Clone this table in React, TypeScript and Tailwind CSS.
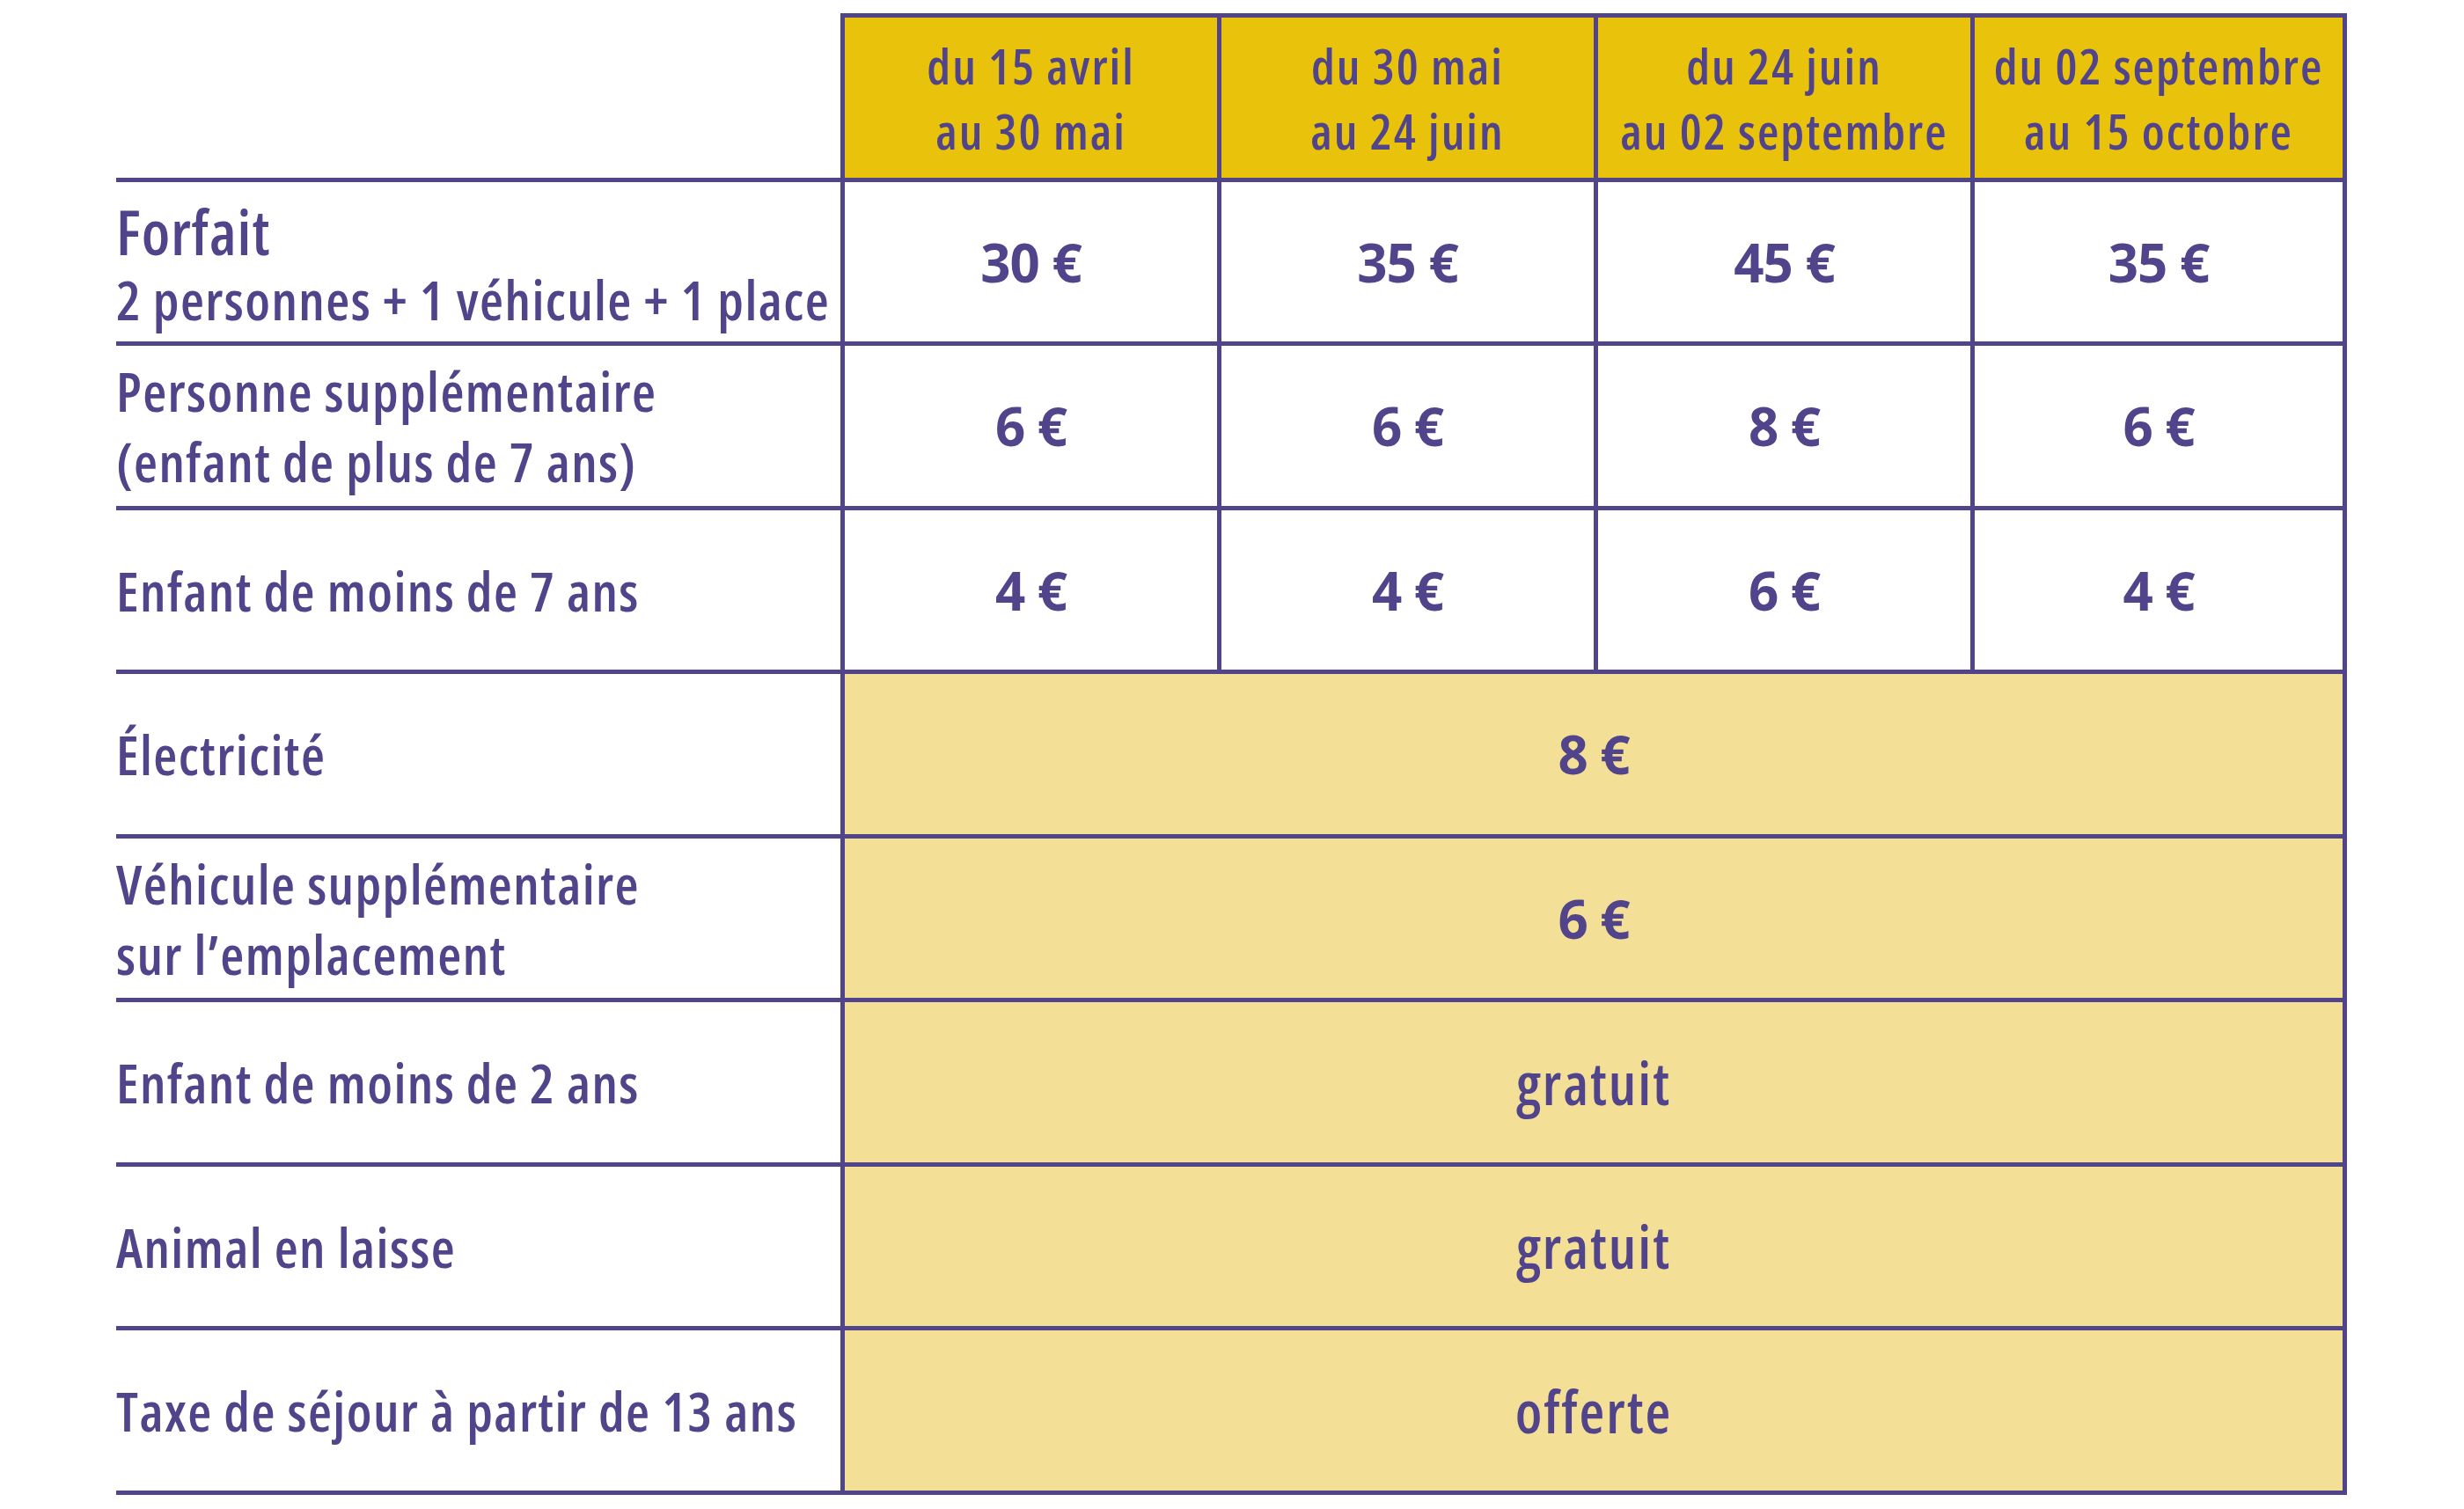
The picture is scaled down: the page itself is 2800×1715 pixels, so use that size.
import React from 'react'

const periods = [
  ['du 15 avril', 'au 30 mai'],
  ['du 30 mai', 'au 24 juin'],
  ['du 24 juin', 'au 02 septembre'],
  ['du 02 septembre', 'au 15 octobre'],
]

const seasonal = [
  { label: ['Personne supplémentaire', '(enfant de plus de 7 ans)'], values: ['6 €', '6 €', '8 €', '6 €'] },
  { label: ['Enfant de moins de 7 ans'], values: ['4 €', '4 €', '6 €', '4 €'] },
]

const flat = [
  { label: ['Électricité'], value: '8 €', price: true },
  { label: ['Véhicule supplémentaire', 'sur l’emplacement'], value: '6 €', price: true },
  { label: ['Enfant de moins de 2 ans'], value: 'gratuit', price: false },
  { label: ['Animal en laisse'], value: 'gratuit', price: false },
  { label: ['Taxe de séjour à partir de 13 ans'], value: 'offerte', price: false },
]

const labelCell =
  "flex flex-col justify-center border-b-[5px] border-[#51448b] font-['Open_Sans'] font-semibold [font-stretch:75%] text-[62px] tracking-[1.4px] leading-[80px] text-[#51448b] whitespace-nowrap"
const priceText =
  "font-['Open_Sans'] font-bold [font-stretch:88%] text-[60px] tracking-[-1px] text-[#51448b]"

export default function App() {
  return (
    <div className="min-h-screen bg-white pt-[15px] pl-[132px]">
      <div className="grid grid-cols-[823px_428px_428px_428px_428px] grid-rows-[192px_186px_187px_186px_187px_186px_187px_186px_187px]">
        {/* header */}
        <div className="border-b-[5px] border-[#51448b]" />
        {periods.map((p, i) => (
          <div
            key={i}
            className={`flex flex-col items-center justify-center bg-[#e9c30b] border-t-[5px] border-b-[5px] border-l-[5px] border-[#51448b] font-['Open_Sans'] font-semibold [font-stretch:75%] text-[56px] tracking-[2px] leading-[74px] text-[#51448b] whitespace-nowrap ${
              i === 3 ? 'border-r-[5px]' : ''
            }`}
          >
            <span>{p[0]}</span>
            <span>{p[1]}</span>
          </div>
        ))}

        {/* forfait */}
        <div className={labelCell}>
          <span className="text-[70px] tracking-[1px] leading-[84px]">Forfait</span>
          <span className="leading-[70px]">2 personnes + 1 véhicule + 1 place</span>
        </div>
        {['30 €', '35 €', '45 €', '35 €'].map((v, i) => (
          <div
            key={i}
            className={`flex items-center justify-center border-b-[5px] border-l-[5px] border-[#51448b] ${priceText} ${
              i === 3 ? 'border-r-[5px]' : ''
            }`}
          >
            {v}
          </div>
        ))}

        {seasonal.map((row, r) => (
          <React.Fragment key={r}>
            <div className={labelCell}>
              {row.label.map((l) => (
                <span key={l}>{l}</span>
              ))}
            </div>
            {row.values.map((v, i) => (
              <div
                key={i}
                className={`flex items-center justify-center border-b-[5px] border-l-[5px] border-[#51448b] ${priceText} ${
                  i === 3 ? 'border-r-[5px]' : ''
                }`}
              >
                {v}
              </div>
            ))}
          </React.Fragment>
        ))}

        {flat.map((row, r) => (
          <React.Fragment key={r}>
            <div className={labelCell}>
              {row.label.map((l) => (
                <span key={l}>{l}</span>
              ))}
            </div>
            <div
              className={`col-span-4 flex items-center justify-center bg-[#f4df97] border-b-[5px] border-l-[5px] border-r-[5px] border-[#51448b] ${
                row.price
                  ? priceText
                  : "font-['Open_Sans'] font-semibold [font-stretch:75%] text-[66px] tracking-[2px] text-[#51448b]"
              }`}
            >
              {row.value}
            </div>
          </React.Fragment>
        ))}
      </div>
    </div>
  )
}
